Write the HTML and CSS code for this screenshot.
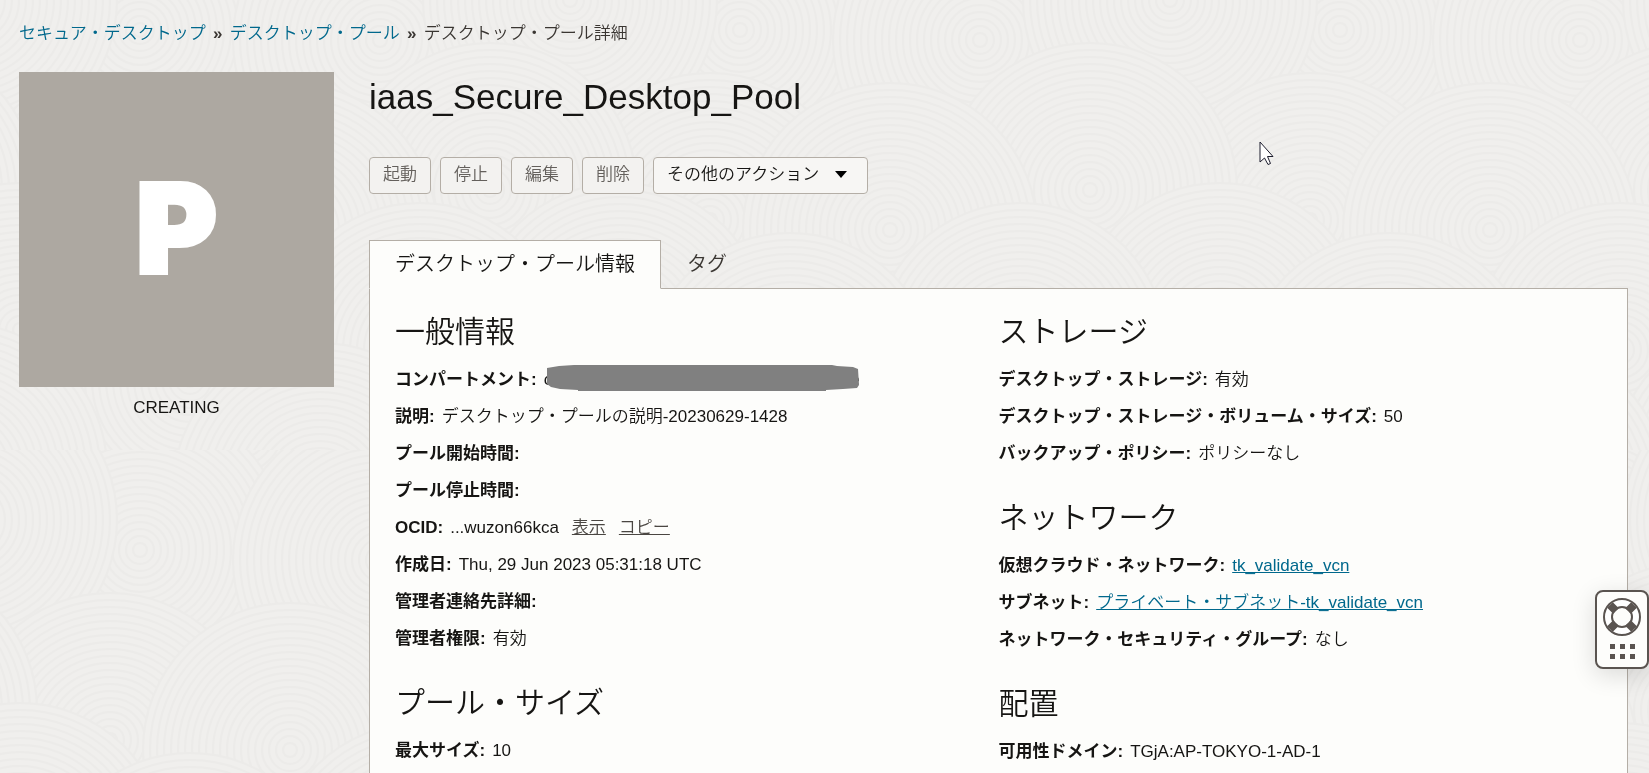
FILE: index.html
```html
<!DOCTYPE html>
<html lang="ja">
<head>
<meta charset="utf-8">
<title>デスクトップ・プール詳細</title>
<link rel="stylesheet" href="styles.css">
</head>
<body>
<svg class="texture" aria-hidden="true">
  <defs>
    <g id="rings">
      <circle r="147"/><circle r="140"/><circle r="133"/><circle r="126"/><circle r="119"/><circle r="112"/><circle r="105"/><circle r="98"/><circle r="91"/><circle r="84"/><circle r="77"/><circle r="70"/><circle r="63"/><circle r="56"/><circle r="49"/><circle r="42"/><circle r="35"/><circle r="28"/><circle r="21"/><circle r="14"/><circle r="7"/>
    </g>
    <pattern id="swirls" width="600" height="520" patternUnits="userSpaceOnUse" patternTransform="translate(140 -70)">
      <g class="ring-lines">
        <use href="#rings" x="100" y="-20"/><use href="#rings" x="420" y="-60"/>
        <use href="#rings" x="0" y="100"/><use href="#rings" x="600" y="100"/>
        <use href="#rings" x="240" y="110"/><use href="#rings" x="430" y="70"/>
        <use href="#rings" x="-30" y="290"/><use href="#rings" x="570" y="290"/>
        <use href="#rings" x="350" y="260"/><use href="#rings" x="150" y="300"/>
        <use href="#rings" x="480" y="400"/><use href="#rings" x="280" y="420"/>
        <use href="#rings" x="50" y="450"/><use href="#rings" x="650" y="450"/>
        <use href="#rings" x="420" y="540"/><use href="#rings" x="180" y="560"/>
      </g>
    </pattern>
  </defs>
  <rect width="100%" height="100%" fill="url(#swirls)"/>
</svg>

<div class="page">
  <nav class="breadcrumb" aria-label="パンくず">
    <a href="#">セキュア・デスクトップ</a><span class="sep">»</span><a href="#">デスクトップ・プール</a><span class="sep">»</span><span>デスクトップ・プール詳細</span>
  </nav>

  <div class="layout">
    <aside class="status">
      <div class="tile">P</div>
      <p class="state">CREATING</p>
    </aside>

    <main class="detail">
      <h1 class="title">iaas_Secure_Desktop_Pool</h1>
      <div class="actions">
        <button class="btn" type="button" disabled>起動</button>
        <button class="btn" type="button" disabled>停止</button>
        <button class="btn" type="button" disabled>編集</button>
        <button class="btn" type="button" disabled>削除</button>
        <button class="btn btn-menu" type="button" aria-haspopup="true">その他のアクション<svg class="caret" viewBox="0 0 12 7" aria-hidden="true"><path d="M0 0h12L6 7z"/></svg></button>
      </div>

      <div class="tabs" role="tablist">
        <button class="tab tab-active" type="button" role="tab" aria-selected="true">デスクトップ・プール情報</button>
        <button class="tab" type="button" role="tab" aria-selected="false">タグ</button>
      </div>

      <div class="panel" role="tabpanel">
        <div class="column">
          <section class="group">
            <h2>一般情報</h2>
            <dl>
              <div class="row"><dt>コンパートメント:</dt><dd class="redacted"><span>c</span><span>e</span><svg class="mask" viewBox="0 0 312 26" preserveAspectRatio="none" aria-hidden="true"><path d="M0 3L12 1L27 0H285L290 1L306 2L311 4L312 20L310 23L296 24L279 25V26H31V25L13 24L4 22L0 19z"/></svg></dd></div>
              <div class="row"><dt>説明:</dt><dd>デスクトップ・プールの説明-20230629-1428</dd></div>
              <div class="row"><dt>プール開始時間:</dt><dd></dd></div>
              <div class="row"><dt>プール停止時間:</dt><dd></dd></div>
              <div class="row"><dt>OCID:</dt><dd class="ocid"><span>...wuzon66kca</span><a class="quiet" href="#">表示</a><a class="quiet" href="#">コピー</a></dd></div>
              <div class="row"><dt>作成日:</dt><dd>Thu, 29 Jun 2023 05:31:18 UTC</dd></div>
              <div class="row"><dt>管理者連絡先詳細:</dt><dd></dd></div>
              <div class="row"><dt>管理者権限:</dt><dd>有効</dd></div>
            </dl>
          </section>
          <section class="group">
            <h2>プール・サイズ</h2>
            <dl>
              <div class="row"><dt>最大サイズ:</dt><dd>10</dd></div>
            </dl>
          </section>
        </div>
        <div class="column">
          <section class="group">
            <h2>ストレージ</h2>
            <dl>
              <div class="row"><dt>デスクトップ・ストレージ:</dt><dd>有効</dd></div>
              <div class="row"><dt>デスクトップ・ストレージ・ボリューム・サイズ:</dt><dd>50</dd></div>
              <div class="row"><dt>バックアップ・ポリシー:</dt><dd>ポリシーなし</dd></div>
            </dl>
          </section>
          <section class="group">
            <h2>ネットワーク</h2>
            <dl>
              <div class="row"><dt>仮想クラウド・ネットワーク:</dt><dd><a href="#">tk_validate_vcn</a></dd></div>
              <div class="row"><dt>サブネット:</dt><dd><a href="#">プライベート・サブネット-tk_validate_vcn</a></dd></div>
              <div class="row"><dt>ネットワーク・セキュリティ・グループ:</dt><dd>なし</dd></div>
            </dl>
          </section>
          <section class="group">
            <h2>配置</h2>
            <dl>
              <div class="row"><dt>可用性ドメイン:</dt><dd>TGjA:AP-TOKYO-1-AD-1</dd></div>
            </dl>
          </section>
        </div>
      </div>
    </main>
  </div>
</div>

<button class="help" type="button" aria-label="ヘルプ">
  <svg class="buoy" viewBox="0 0 38 38" aria-hidden="true">
    <circle cx="19" cy="19" r="14" fill="none" stroke="#fff" stroke-width="8"/>
    <g stroke="#5a5450" stroke-width="8"><path d="M7 7l6 6M31 7l-6 6M7 31l6-6M31 31l-6-6"/></g>
    <g fill="none" stroke="#5a5450" stroke-width="2"><circle cx="19" cy="19" r="18"/><circle cx="19" cy="19" r="10"/></g>
  </svg>
  <svg class="grip" viewBox="0 0 25 15" aria-hidden="true"><path d="M0 0h5v5H0zM10 0h5v5h-5zM20 0h5v5h-5zM0 10h5v5H0zM10 10h5v5h-5zM20 10h5v5h-5z"/></svg>
</button>

<svg class="pointer" viewBox="0 0 15 25" aria-hidden="true"><path d="M1 1V21L5.500 17L9 23.500L11.500 22.500L8.500 15.500H14z"/></svg>
</body>
</html>
```
FILE: styles.css
```css
* {
  box-sizing: border-box;
}

body {
  margin: 0;
  background: #f0efed;
  color: #161513;
  font: 350 17px/26px "Liberation Sans", "Noto Sans CJK JP", sans-serif;
}

h1, h2, p, dl, dd {
  margin: 0;
  font-weight: 350;
}

button {
  font: inherit;
  color: inherit;
}

a {
  color: #00688c;
}

.texture {
  position: fixed;
  inset: 0;
  z-index: -1;
  width: 100%;
  height: 100%;
}

.ring-lines {
  fill: #f0efed;
  stroke: #ecebe9;
  stroke-width: 2;
}

.page {
  display: flex;
  flex-direction: column;
  min-height: 100vh;
  padding: 21px 21px 0 19px;
}

.breadcrumb {
  display: flex;
  margin-bottom: 25px;
  color: #3a3632;
}

.breadcrumb a {
  text-decoration: none;
}

.sep {
  width: 24px;
  text-align: center;
  font-weight: 700;
}

.layout {
  display: grid;
  flex: 1;
  grid-template-columns: 315px 1fr;
  gap: 35px;
}

.tile {
  display: grid;
  place-items: center;
  aspect-ratio: 1;
  padding-bottom: 4px;
  background: #ada8a1;
  color: #fff;
  font: 900 124px/180px Inter, sans-serif;
  -webkit-text-stroke: 4px #fff;
}

.state {
  margin-top: 8px;
  text-align: center;
}

.detail {
  display: flex;
  flex-direction: column;
}

.title {
  font-size: 35px;
  line-height: 50px;
}

.actions {
  display: flex;
  gap: 9px;
  margin: 35px 0 46px;
}

.btn {
  height: 37px;
  padding: 0 13px 2px;
  border: 1px solid #b4aea6;
  border-radius: 4px;
  background: #f3f2f0;
  color: #64605c;
}

.btn-menu {
  display: flex;
  align-items: center;
  gap: 16px;
  padding-right: 20px;
  background: #f7f6f4;
  color: #161513;
}

.caret {
  width: 12px;
  height: 7px;
}

.tabs {
  display: flex;
  position: relative;
  margin-bottom: -1px;
}

.tab {
  height: 49px;
  padding: 0 25px 2px;
  border: 1px solid transparent;
  background: none;
  color: #3a3632;
  font-size: 20px;
}

.tab-active {
  border-color: #b4aea6;
  border-bottom-color: #fdfdfb;
  background: #fdfdfb;
  color: #161513;
}

.panel {
  display: grid;
  flex: 1;
  grid-template-columns: 1fr 1fr;
  padding: 23px 25px 0;
  border: 1px solid #b4aea6;
  border-bottom: 0;
  background: #fdfdfb;
}

.group {
  margin-bottom: 26px;
}

.group:last-child {
  margin-bottom: 0;
}

.group h2 {
  margin-bottom: 9px;
  font-size: 30px;
  line-height: 40px;
}

.row {
  display: flex;
  gap: 7px;
  line-height: 37px;
}

.row dt {
  font-weight: 700;
}

.redacted {
  display: flex;
  position: relative;
  justify-content: space-between;
  width: 316px;
}

.mask {
  position: absolute;
  top: 4px;
  left: 3px;
  width: 312px;
  height: 26px;
  fill: #808080;
}

.ocid {
  display: flex;
  gap: 13px;
}

.quiet {
  color: #4a4642;
}

.help {
  display: flex;
  position: fixed;
  top: 590px;
  right: 0;
  flex-direction: column;
  align-items: center;
  gap: 8px;
  padding: 6px 6px 8px;
  border: 2px solid #5a5450;
  border-radius: 8px;
  background: #fdfdfb;
  box-shadow: 0 6px 24px rgba(0, 0, 0, 0.14);
}

.buoy {
  width: 38px;
  height: 38px;
}

.grip {
  width: 25px;
  height: 15px;
  fill: #5a5450;
}

.pointer {
  position: absolute;
  top: 141px;
  left: 1259px;
  width: 15px;
  height: 25px;
  fill: #fff;
  stroke: #1c1c2c;
}
```
